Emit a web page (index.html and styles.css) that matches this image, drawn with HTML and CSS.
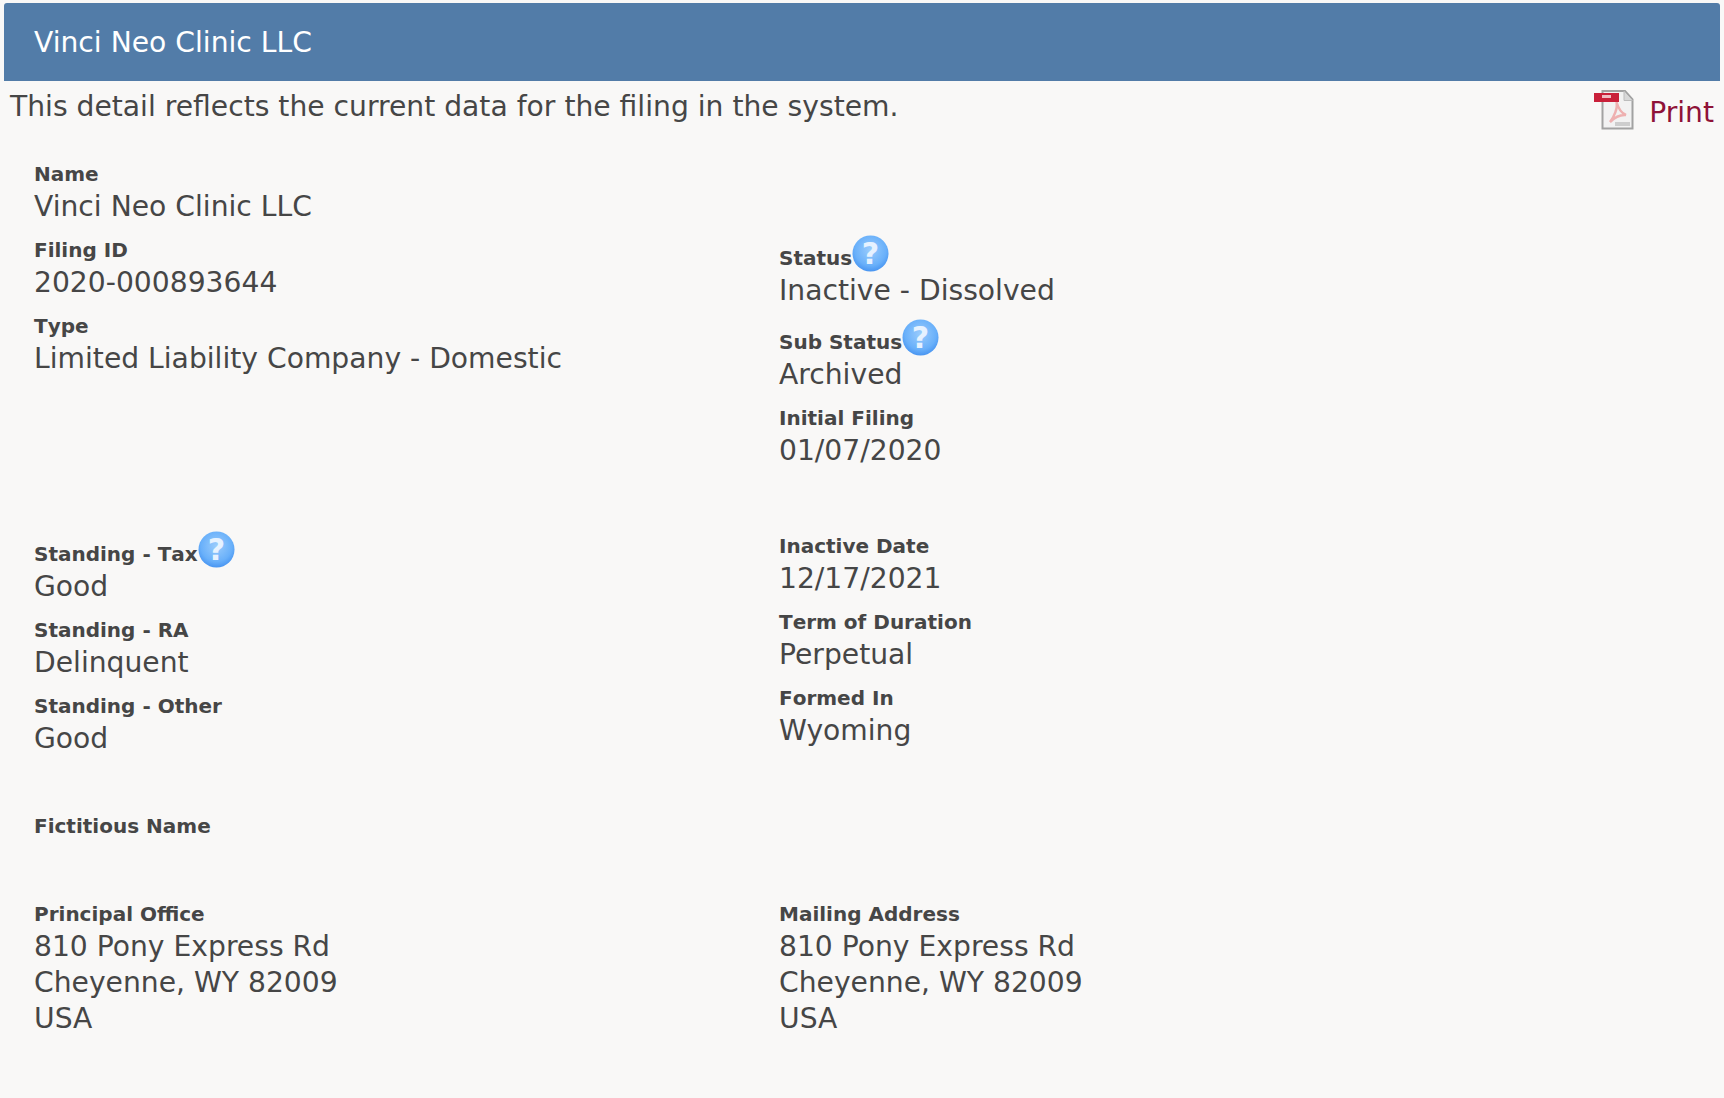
FILE: index.html
```html
<!DOCTYPE html>
<html lang="en">
<head>
  <meta charset="UTF-8">
  <title>Vinci Neo Clinic LLC</title>
  <link rel="stylesheet" href="styles.css">
</head>
<body>
  <svg width="0" height="0" class="defs">
    <defs>
      <radialGradient id="helpFill" cx="50%" cy="40%" r="62%">
        <stop offset="0" stop-color="#9accfc"/>
        <stop offset="0.7" stop-color="#69b0fa"/>
        <stop offset="1" stop-color="#4592f0"/>
      </radialGradient>
      <symbol id="help" viewBox="0 0 37 37">
        <circle cx="18.500" cy="18.500" r="18" fill="url(#helpFill)"/>
        <text x="18.500" y="29" text-anchor="middle" class="help-mark">?</text>
      </symbol>
    </defs>
  </svg>

  <div class="title-bar">Vinci Neo Clinic LLC</div>

  <div class="intro">
    <span>This detail reflects the current data for the filing in the system.</span>
    <a class="print" href="#">
      <svg class="pdf-icon" width="40" height="40" viewBox="0 0 40 40">
        <path d="M8.500 1H31L38.500 9.500V38.500H8.500Z" fill="#f2f2f2" stroke="#a2a2a2" stroke-width="2"/>
        <path d="M30 1V10.500H38.500" fill="#d8d8d8" stroke="#bcbcbc"/>
        <path d="M16 32C20 27 24 18 22.500 12C24.500 19 27 23 32 25C27 24.500 21 27 16 32Z" fill="none" stroke="#eeb0b0" stroke-width="2.500"/>
        <rect x="21" y="32" width="15" height="4" fill="#cdcdcd"/>
        <rect x="0" y="3" width="25" height="9" fill="#c9203a"/>
        <rect x="8" y="5" width="9" height="3" fill="#f0bcc4"/>
      </svg>
      <span class="print-text">Print</span>
    </a>
  </div>

  <div class="details">
    <div class="col">
      <div class="field"><div class="label">Name</div><div class="value">Vinci Neo Clinic LLC</div></div>
      <div class="field"><div class="label">Filing ID</div><div class="value">2020-000893644</div></div>
      <div class="field"><div class="label">Type</div><div class="value">Limited Liability Company - Domestic</div></div>
    </div>
    <div class="col col-status">
      <div class="field has-help"><div class="label">Status<svg class="help"><use href="#help"/></svg></div><div class="value">Inactive - Dissolved</div></div>
      <div class="field has-help"><div class="label">Sub Status<svg class="help"><use href="#help"/></svg></div><div class="value">Archived</div></div>
      <div class="field"><div class="label">Initial Filing</div><div class="value">01/07/2020</div></div>
    </div>

    <div class="col col-lower">
      <div class="field has-help"><div class="label">Standing - Tax<svg class="help"><use href="#help"/></svg></div><div class="value">Good</div></div>
      <div class="field"><div class="label">Standing - RA</div><div class="value">Delinquent</div></div>
      <div class="field"><div class="label">Standing - Other</div><div class="value">Good</div></div>
    </div>
    <div class="col col-lower">
      <div class="field"><div class="label">Inactive Date</div><div class="value">12/17/2021</div></div>
      <div class="field"><div class="label">Term of Duration</div><div class="value">Perpetual</div></div>
      <div class="field"><div class="label">Formed In</div><div class="value">Wyoming</div></div>
    </div>

    <div class="col col-full fictitious">
      <div class="field"><div class="label">Fictitious Name</div></div>
    </div>

    <div class="col">
      <div class="field"><div class="label">Principal Office</div><div class="value">810 Pony Express Rd<br>Cheyenne, WY 82009<br>USA</div></div>
    </div>
    <div class="col">
      <div class="field"><div class="label">Mailing Address</div><div class="value">810 Pony Express Rd<br>Cheyenne, WY 82009<br>USA</div></div>
    </div>
  </div>
</body>
</html>
```

FILE: styles.css
```css
body {
  margin: 0;
  padding: 3px 4px 0;
  background-color: #f9f8f7;
  color: #464646;
  font-family: "DejaVu Sans", Verdana, sans-serif;
  font-size: 28.2px;
}

.defs {
  position: absolute;
}

.help-mark {
  fill: #e6f2ff;
  font-family: "DejaVu Sans", sans-serif;
  font-size: 30px;
  font-weight: bold;
}

/* Blue heading */
.title-bar {
  height: 78px;
  line-height: 80px;
  padding-left: 30px;
  background-color: #527ca8;
  color: #fff;
  border-radius: 3px 3px 0 0;
}

.intro {
  display: flex;
  justify-content: space-between;
  padding: 9px 6px 0;
  height: 78px;
  box-sizing: border-box;
}

.print {
  display: flex;
  align-items: flex-start;
  gap: 15px;
  color: #8f1238;
  text-decoration: none;
}

.print-text {
  margin-top: 6px;
}

/* Detail grid */
.details {
  display: grid;
  grid-template-columns: 745px 1fr;
  padding-left: 30px;
}

.field {
  margin-bottom: 10px;
}

.has-help {
  padding-top: 8px;
}

.label {
  display: flex;
  align-items: center;
  height: 30px;
  font-size: 20px;
  font-weight: bold;
  font-kerning: none;
}

.value {
  line-height: 36px;
}

.help {
  flex: none;
  width: 37px;
  height: 37px;
  margin-top: -10px;
}

.col-status {
  padding-top: 76px;
}

.col-lower {
  margin-top: 52px;
}

.col-full {
  grid-column: 1 / -1;
}

.fictitious {
  margin-top: 44px;
  margin-bottom: 48px;
}
```
